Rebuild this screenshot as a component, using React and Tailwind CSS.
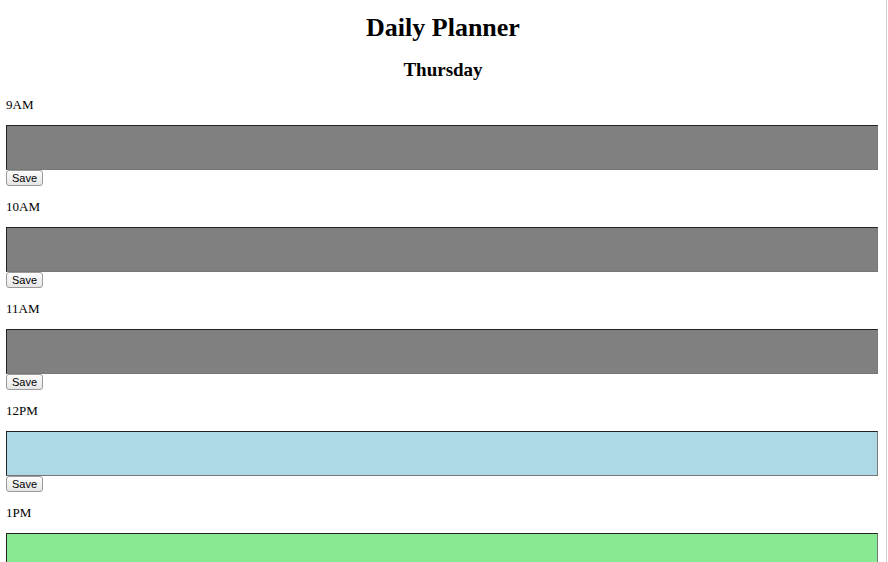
import React from "react";

const HOURS = [
  { label: "9AM", tone: "past" },
  { label: "10AM", tone: "past" },
  { label: "11AM", tone: "past" },
  { label: "12PM", tone: "present" },
  { label: "1PM", tone: "future" },
];

const TONE_BG = {
  past: "bg-[#808080]",
  present: "bg-[#add8e6]",
  future: "bg-[#88e992]",
};

function HourBlock({ label, tone, last }) {
  return (
    <div>
      <p className="my-[13px] text-[13px] leading-[15px]">{label}</p>
      <textarea
        className={`block h-[45px] w-[872px] resize-none border border-t-[#222] border-l-[#222] border-b-[#777] border-r-[#777] ${TONE_BG[tone]}`}
      />
      {!last && (
        <button
          type="button"
          className="flex h-[16px] w-[37px] items-center justify-center rounded-[3px] border border-[#9a9a9a] bg-gradient-to-b from-[#fcfcfc] to-[#e6e6e6] text-[11px] leading-none text-black"
          style={{ fontFamily: '"Liberation Sans", Arial, sans-serif' }}
        >
          Save
        </button>
      )}
    </div>
  );
}

export default function App() {
  return (
    <div
      className="h-[562px] w-[887px] overflow-hidden border-r border-[#d0d0d0] bg-white text-black"
      style={{ fontFamily: '"Liberation Serif", "Times New Roman", serif' }}
    >
      <div className="px-[6px] pt-[13px]">
        <h1 className="text-center text-[26px] font-bold leading-[30px]">Daily Planner</h1>
        <h2 className="mt-[16px] text-center text-[19px] font-bold leading-[22px]">Thursday</h2>
        <div className="pt-[3px]">
          {HOURS.map((h, i) => (
            <HourBlock key={h.label} {...h} last={i === HOURS.length - 1} />
          ))}
        </div>
      </div>
    </div>
  );
}
